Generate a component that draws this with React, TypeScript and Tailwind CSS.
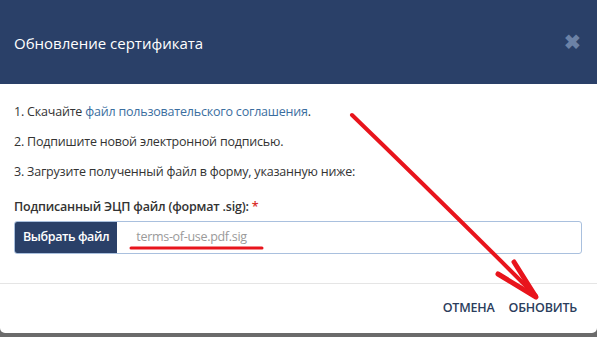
export default function App() {
  return (
    <div className="relative h-[337px] w-[597px] overflow-hidden bg-[#6b6b6b] font-['Open_Sans',sans-serif]">
      <div className="flex h-[333px] flex-col overflow-hidden rounded-b-[5px] bg-white">
        <div className="flex h-[84px] shrink-0 items-center justify-between bg-[#2a4068] pl-[14px] pr-[16px]">
          <h2 className="pt-[2px] text-[15px] text-white">Обновление сертификата</h2>
          <span className="text-[20px] font-bold leading-none text-[#6c82a6]">✖</span>
        </div>

        <div className="flex flex-col px-[14px] pt-[19px] text-[12.5px] tracking-[-0.2px] text-[#333]">
          <p className="h-[30px]">
            1. Скачайте <a className="text-[#3b6ea0]">файл пользовательского соглашения</a>.
          </p>
          <p className="h-[30px]">2. Подпишите новой электронной подписью.</p>
          <p className="h-[30px]">3. Загрузите полученный файл в форму, указанную ниже:</p>

          <label className="mt-[5px] font-semibold text-[#333]">
            Подписанный ЭЦП файл (формат .sig): <span className="text-[#d9302b]">*</span>
          </label>
          <div className="mt-[4px] flex h-[33px] w-[568px] overflow-hidden rounded-[3px] border border-[#a9c0de]">
            <button className="bg-[#2a4068] px-[8px] font-semibold tracking-[-0.4px] text-white">Выбрать файл</button>
            <span className="flex items-center pl-[19px] text-[12.5px] tracking-[-0.3px] text-[#9a9a9a]">terms-of-use.pdf.sig</span>
          </div>
        </div>

        <div className="mt-auto flex h-[50px] items-center justify-end gap-[14px] border-t border-[#e5e5e5] pr-[20px] pb-[1px]">
          <button className="text-[12.5px] font-semibold tracking-[-0.2px] text-[#2b3d5c]">ОТМЕНА</button>
          <button className="text-[12.5px] font-semibold tracking-[-0.2px] text-[#2b3d5c]">ОБНОВИТЬ</button>
        </div>
      </div>

      <svg className="pointer-events-none absolute inset-0" width="597" height="337" viewBox="0 0 597 337">
        <g fill="none" stroke="#e8141c" strokeLinecap="round" strokeLinejoin="round">
          <path d="M352 115 Q 440 200 536 296" strokeWidth="4" />
          <path d="M498 274 L536 297 L514 262" strokeWidth="5" />
          <path d="M131 248 L262 248" strokeWidth="3" />
        </g>
      </svg>
    </div>
  )
}
